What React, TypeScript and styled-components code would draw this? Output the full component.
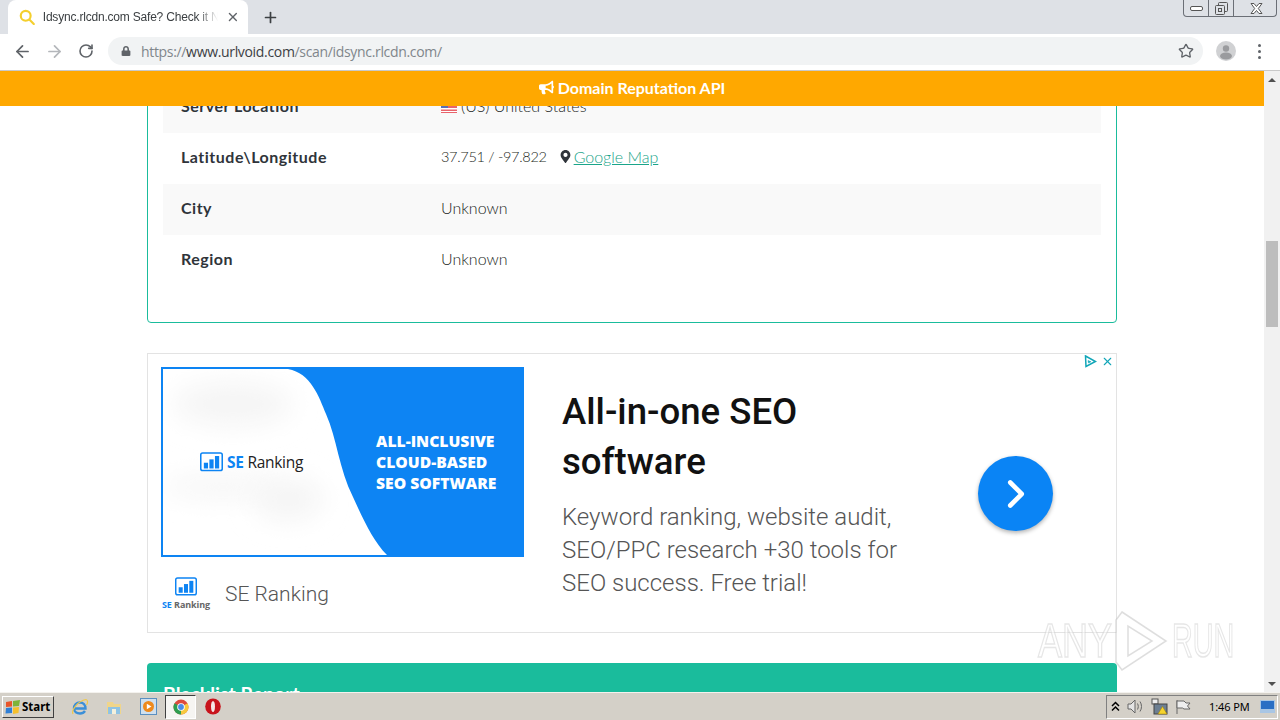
import React from 'react';
import styled, { createGlobalStyle } from 'styled-components';
import { FaBullhorn, FaLock, FaMapMarkerAlt } from 'react-icons/fa';
import { ArrowLeft, ArrowRight, ChevronRight, Plus, RotateCw, Star, X } from 'lucide-react';

const GlobalStyle = createGlobalStyle`
  html, body {
    margin: 0;
    padding: 0;
    width: 1280px;
    height: 720px;
    overflow: hidden;
    background: #fff;
  }
  * { box-sizing: border-box; }
`;

const Screen = styled.div`
  width: 1280px;
  height: 720px;
  display: flex;
  flex-direction: column;
  overflow: hidden;
  position: relative;
  font-family: 'Lato', 'Liberation Sans', sans-serif;
`;

/* browser chrome */
const TabStrip = styled.div`
  height: 34px;
  flex: none;
  background: #dee1e6;
  display: flex;
  align-items: flex-end;
  padding-left: 8px;
`;

const Tab = styled.div`
  width: 240px;
  height: 34px;
  background: #fff;
  border-radius: 8px 8px 0 0;
  display: flex;
  align-items: center;
  padding: 0 8px 0 11px;
  gap: 8px;
`;

const TabTitle = styled.span`
  width: 178px;
  font: 12px 'Liberation Sans', 'Open Sans', sans-serif;
  letter-spacing: -0.2px;
  color: #3c4043;
  white-space: nowrap;
  overflow: hidden;
  -webkit-mask-image: linear-gradient(to right, #000 88%, transparent);
  mask-image: linear-gradient(to right, #000 88%, transparent);
`;

const NewTab = styled.div`
  width: 44px;
  height: 34px;
  display: flex;
  align-items: center;
  justify-content: center;
  color: #3c4043;
`;

const WindowControls = styled.div`
  margin-left: auto;
  margin-right: 3px;
  align-self: flex-start;
  width: 94px;
  height: 17px;
  display: grid;
  grid-template-columns: 25px 25px 44px;
  border: 1px solid #6b6f76;
  border-top: none;
  border-radius: 0 0 4px 4px;
`;

const WindowButton = styled.div<{ $last?: boolean }>`
  display: flex;
  align-items: center;
  justify-content: center;
  border-right: ${p => (p.$last ? 'none' : '1px solid #6b6f76')};
`;

const Toolbar = styled.div`
  height: 37px;
  flex: none;
  background: #fff;
  border-bottom: 1px solid #c9c9c9;
  display: flex;
  align-items: center;
  padding: 0 0 2px 0;
`;

const NavButton = styled.div<{ $muted?: boolean }>`
  width: 32px;
  height: 28px;
  flex: none;
  display: flex;
  align-items: center;
  justify-content: center;
  color: ${p => (p.$muted ? '#b4b7bb' : '#5f6368')};
`;

const NavGroup = styled.div`
  display: flex;
  padding-left: 6px;
  margin-right: 6px;
`;

const Omnibox = styled.div`
  width: 1095px;
  height: 28px;
  flex: none;
  background: #f1f3f4;
  border-radius: 14px;
  display: flex;
  align-items: center;
  padding: 0 9px 0 13px;
`;

const Url = styled.span`
  margin-left: 10px;
  font: 14px 'Open Sans', 'Liberation Sans', sans-serif;
  letter-spacing: -0.33px;
  color: #80868b;
  white-space: nowrap;
`;

const UrlStrong = styled.span`
  color: #3c4043;
`;

const StarSlot = styled.div`
  margin-left: auto;
  display: flex;
  color: #5f6368;
`;

const Avatar = styled.div`
  width: 20px;
  height: 20px;
  flex: none;
  margin-left: 13px;
  border-radius: 50%;
  background: #d0d1d3;
  overflow: hidden;
`;

const MenuDots = styled.div`
  flex: none;
  margin-left: 22px;
  display: grid;
  gap: 3px;
`;

const MenuDot = styled.i`
  display: block;
  width: 3px;
  height: 3px;
  border-radius: 50%;
  background: #5f6368;
`;

/* page */
const Viewport = styled.div`
  flex: 1;
  min-height: 0;
  display: flex;
  position: relative;
`;

const Page = styled.main`
  width: 1264px;
  flex: none;
  overflow: hidden;
  position: relative;
  background: #fff;
`;

const StickyBar = styled.div`
  position: absolute;
  top: 0;
  left: 0;
  right: 0;
  height: 35px;
  z-index: 2;
  background: #ffa800;
  color: #fff;
  font-size: 16px;
  font-weight: 700;
  display: flex;
  align-items: center;
  justify-content: center;
  gap: 4px;
  padding-bottom: 2px;
`;

const Column = styled.div`
  width: 970px;
  margin: -20px auto 0 147px;
  display: flex;
  flex-direction: column;
`;

const InfoCard = styled.section`
  border: 1px solid #1abc9c;
  border-radius: 4px;
  padding: 30px 15px 36px;
`;

const Row = styled.div<{ $shaded?: boolean }>`
  height: 51px;
  display: grid;
  grid-template-columns: 260px 1fr;
  align-items: center;
  padding: 0 0 4px 18px;
  font-size: 16px;
  color: #2f343a;
  background: ${p => (p.$shaded ? '#f9f9f9' : '#fff')};
`;

const RowLabel = styled.div`
  font-weight: 700;
  letter-spacing: 0.5px;
`;

const RowValue = styled.div`
  font-weight: 300;
  color: #1c1f22;
  display: flex;
  align-items: center;
`;

const Coords = styled.span`
  font-size: 14.5px;
  letter-spacing: -0.3px;
`;

const FlagIcon = styled.svg`
  margin: 0 4px 0 0;
`;

const MapLink = styled.a`
  margin-left: 12px;
  display: inline-flex;
  align-items: center;
  gap: 2px;
  color: #2f343a;
  text-decoration: none;
`;

const MapLinkText = styled.span`
  color: #1aa58a;
  text-decoration: underline;
`;

const AdCard = styled.section`
  position: relative;
  margin-top: 30px;
  height: 280px;
  border: 1px solid #e3e3e3;
  padding: 13px 13px 0;
  display: grid;
  grid-template-columns: 363px 1fr;
  column-gap: 38px;
  font-family: 'Roboto', 'Liberation Sans', sans-serif;
`;

const AdChoices = styled.div`
  position: absolute;
  top: 1px;
  right: 2px;
  display: flex;
  gap: 4px;
  align-items: center;
  color: #11a6b8;
`;

const AdLeft = styled.div`
  display: flex;
  flex-direction: column;
`;

const Creative = styled.div`
  position: relative;
  height: 190px;
  border: 2px solid #0d84f3;
  background: #fff;
  overflow: hidden;
  display: grid;
  grid-template-columns: 213px 1fr;
  align-items: center;
`;

const CreativeArt = styled.svg`
  position: absolute;
  inset: 0;
`;

const CreativeLogo = styled.div`
  position: relative;
  display: flex;
  align-items: center;
  justify-content: flex-end;
  gap: 4px;
  padding-right: 73px;
  font: 500 15.5px 'Open Sans', 'Liberation Sans', sans-serif;
  letter-spacing: -0.3px;
  color: #222;
  white-space: nowrap;
`;

const CreativeLogoSE = styled.span`
  color: #0d84f3;
  font-weight: 700;
`;

const CreativeHeadline = styled.div`
  position: relative;
  font: 800 15.7px/21px 'Open Sans', 'Liberation Sans', sans-serif;
  color: #fff;
  white-space: nowrap;
`;

const AdBrand = styled.div`
  margin-top: 20px;
  display: flex;
  align-items: center;
  gap: 14px;
`;

const BrandMark = styled.div`
  width: 50px;
  display: flex;
  flex-direction: column;
  align-items: center;
  gap: 2px;
`;

const BrandMarkText = styled.span`
  font: 700 9px 'Open Sans', 'Liberation Sans', sans-serif;
  color: #666;
  white-space: nowrap;
  letter-spacing: -0.1px;
`;

const BrandMarkSE = styled.span`
  color: #0d84f3;
`;

const BrandName = styled.span`
  font-size: 21px;
  font-weight: 300;
  color: #555;
`;

const AdBody = styled.div`
  display: flex;
  flex-direction: column;
  padding-top: 20px;
`;

const AdTitle = styled.h2`
  margin: 0;
  width: 300px;
  font-size: 36.6px;
  line-height: 50px;
  font-weight: 500;
  color: #111;
`;

const AdText = styled.p`
  margin: 14px 0 0;
  width: 360px;
  font-size: 24px;
  line-height: 33px;
  font-weight: 300;
  color: #555;
`;

const AdArrow = styled.div`
  position: absolute;
  left: 830px;
  top: 102px;
  width: 75px;
  height: 75px;
  border-radius: 50%;
  background: #0a84f5;
  box-shadow: 0 2px 4px rgba(0, 0, 0, 0.3);
  color: #fff;
  display: flex;
  align-items: center;
  justify-content: center;
`;

const ReportCard = styled.section`
  margin-top: 30px;
  height: 60px;
  background: #1abc9c;
  border-radius: 4px 4px 0 0;
  padding: 20px 16px 0;
  color: #fff;
  font-size: 19.5px;
  font-weight: 700;
  line-height: 22px;
  overflow: hidden;
`;

const Watermark = styled.div`
  position: absolute;
  left: 1038px;
  top: 539px;
  z-index: 3;
  display: grid;
  grid-template-columns: 76px 58px 60px;
  align-items: center;
  pointer-events: none;
`;

const WatermarkWord = styled.span<{ $squeeze: number }>`
  display: block;
  font: 400 48px/62px 'Liberation Sans', sans-serif;
  white-space: nowrap;
  color: rgba(255, 255, 255, 0.5);
  -webkit-text-stroke: 1.5px rgba(200, 200, 200, 0.45);
  transform: scaleX(${p => p.$squeeze});
  transform-origin: left center;
`;

/* scrollbar */
const Scrollbar = styled.aside`
  width: 16px;
  flex: none;
  background: #f1f1f1;
  display: flex;
  flex-direction: column;
  align-items: center;
`;

const ScrollArrow = styled.div<{ $down?: boolean }>`
  height: 17px;
  flex: none;
  margin-top: ${p => (p.$down ? 'auto' : '0')};
  display: flex;
  align-items: center;
  &::before {
    content: '';
    border-left: 4px solid transparent;
    border-right: 4px solid transparent;
    border-bottom: ${p => (p.$down ? 'none' : '4px solid #505050')};
    border-top: ${p => (p.$down ? '4px solid #505050' : 'none')};
  }
`;

const ScrollThumb = styled.div`
  width: 12px;
  height: 86px;
  flex: none;
  margin-top: 153px;
  background: #bdbdbd;
`;

/* windows taskbar */
const Taskbar = styled.footer`
  height: 28px;
  flex: none;
  background: #d4d0c8;
  border-top: 1px solid #f4f2ee;
  display: flex;
  align-items: center;
  padding-left: 2px;
`;

const StartButton = styled.div`
  width: 52px;
  height: 22px;
  flex: none;
  background: #d4d0c8;
  border: 1px solid;
  border-color: #fff #404040 #404040 #fff;
  display: flex;
  align-items: center;
  gap: 1px;
  padding-left: 2px;
  font: 700 11.5px 'Noto Sans', 'Liberation Sans', sans-serif;
  color: #000;
`;

const QuickLaunch = styled.div`
  display: flex;
  align-items: center;
  margin-left: 9px;
`;

const TaskSlot = styled.div<{ $active?: boolean }>`
  width: ${p => (p.$active ? '31px' : '34px')};
  height: 24px;
  display: flex;
  align-items: center;
  justify-content: center;
  background: ${p => (p.$active ? '#f6f5f2' : 'transparent')};
  border: ${p => (p.$active ? '1px solid' : 'none')};
  border-color: #404040 #fff #fff #404040;
`;

const Tray = styled.div`
  margin-left: auto;
  margin-right: 2px;
  width: 172px;
  height: 24px;
  border: 1px solid;
  border-color: #808080 #fff #fff #808080;
  display: flex;
  align-items: center;
  padding-left: 4px;
  gap: 7px;
`;

const TrayIcon = styled.div`
  display: flex;
  flex: none;
`;

const Clock = styled.span`
  margin-left: 11px;
  margin-right: 3px;
  font: 11px 'Noto Sans', 'Liberation Sans', sans-serif;
  letter-spacing: -0.1px;
  color: #000;
  white-space: nowrap;
`;

const BarsGlyph = ({ size, color }: { size: number; color: string }) => (
  <svg width={size} height={size * 0.85} viewBox="0 0 24 20">
    <rect x="0.8" y="0.8" width="22.4" height="18.4" rx="2" fill="#fff" stroke={color} strokeWidth="1.6" />
    <rect x="4" y="11" width="4.4" height="6" fill={color} />
    <rect x="9.8" y="7.5" width="4.4" height="9.5" fill={color} />
    <rect x="15.6" y="4" width="4.4" height="13" fill={color} />
  </svg>
);

const App: React.FC = () => (
  <Screen>
    <GlobalStyle />
    <TabStrip>
      <Tab>
        <svg width="16" height="16" viewBox="0 0 16 16" fill="none" stroke="#f4cf2e" strokeWidth="2.2">
          <circle cx="6.8" cy="6.8" r="5" />
          <path d="M10.5 10.5 15 15" strokeLinecap="round" />
        </svg>
        <TabTitle>Idsync.rlcdn.com Safe? Check it Now</TabTitle>
        <X size={14} color="#5f6368" strokeWidth={2.4} />
      </Tab>
      <NewTab>
        <Plus size={17} strokeWidth={2.4} />
      </NewTab>
      <WindowControls>
        <WindowButton>
          <svg width="13" height="7" viewBox="0 0 13 7">
            <rect x="0.5" y="1.5" width="12" height="4" rx="1.5" fill="#fff" stroke="#555" />
          </svg>
        </WindowButton>
        <WindowButton>
          <svg width="13" height="13" viewBox="0 0 13 13" fill="none" stroke="#555">
            <rect x="3.5" y="0.5" width="9" height="9" rx="1" />
            <rect x="0.5" y="3.5" width="9" height="9" rx="1" fill="#dee1e6" />
            <rect x="3.5" y="6.5" width="3" height="3" />
          </svg>
        </WindowButton>
        <WindowButton $last>
          <svg width="13" height="11" viewBox="0 0 13 11" fill="#fff" stroke="#555">
            <path d="M1 .5h3L6.500 3.500 9 .5h3L8.300 5.500 12 10.500H9L6.500 7.500 4 10.500H1L4.700 5.500z" />
          </svg>
        </WindowButton>
      </WindowControls>
    </TabStrip>

    <Toolbar>
      <NavGroup>
        <NavButton><ArrowLeft size={19} strokeWidth={2.2} /></NavButton>
        <NavButton $muted><ArrowRight size={19} strokeWidth={2.2} /></NavButton>
        <NavButton><RotateCw size={16} strokeWidth={2.4} /></NavButton>
      </NavGroup>
      <Omnibox>
        <FaLock size={10} color="#5f6368" />
        <Url>
          https://<UrlStrong>www.urlvoid.com</UrlStrong>/scan/idsync.rlcdn.com/
        </Url>
        <StarSlot><Star size={16} strokeWidth={2} /></StarSlot>
      </Omnibox>
      <Avatar>
        <svg width="20" height="20" viewBox="0 0 20 20" fill="#9a9b9e">
          <circle cx="10" cy="7.500" r="3.200" />
          <ellipse cx="10" cy="15" rx="6" ry="3.500" />
        </svg>
      </Avatar>
      <MenuDots>
        <MenuDot />
        <MenuDot />
        <MenuDot />
      </MenuDots>
    </Toolbar>

    <Viewport>
      <Page>
        <StickyBar>
          <FaBullhorn size={15} />
          Domain Reputation API
        </StickyBar>
        <Column>
          <InfoCard>
            <Row $shaded>
              <RowLabel>Server Location</RowLabel>
              <RowValue>
                <FlagIcon width="16" height="14" viewBox="0 0 16 14">
                  <rect width="16" height="14" fill="#e8636b" />
                  <rect y="2" width="16" height="1.500" fill="#fff" />
                  <rect y="5.500" width="16" height="1.500" fill="#fff" />
                  <rect y="9" width="16" height="1.500" fill="#fff" />
                  <rect y="12" width="16" height="1" fill="#fff" />
                  <rect width="7" height="9" fill="#5a6fb5" />
                </FlagIcon>
                (US) United States
              </RowValue>
            </Row>
            <Row>
              <RowLabel>Latitude\Longitude</RowLabel>
              <RowValue>
                <Coords>37.751 / -97.822</Coords>
                <MapLink>
                  <FaMapMarkerAlt size={13} />
                  <MapLinkText>Google Map</MapLinkText>
                </MapLink>
              </RowValue>
            </Row>
            <Row $shaded>
              <RowLabel>City</RowLabel>
              <RowValue>Unknown</RowValue>
            </Row>
            <Row>
              <RowLabel>Region</RowLabel>
              <RowValue>Unknown</RowValue>
            </Row>
          </InfoCard>

          <AdCard>
            <AdChoices>
              <svg width="13" height="13" viewBox="0 0 13 13" fill="none" stroke="currentColor" strokeWidth="1.500">
                <path d="M1.500 1 11.500 6.500 2 11.500z" />
                <path d="M4 5.500 7 6.800 4.500 8z" fill="currentColor" strokeWidth="0.500" />
              </svg>
              <X size={13} strokeWidth={2} />
            </AdChoices>
            <AdLeft>
              <Creative>
                <CreativeArt width="359" height="186" viewBox="0 0 359 186">
                  <defs>
                    <filter id="soft" x="-50%" y="-100%" width="200%" height="300%">
                      <feGaussianBlur stdDeviation="13" />
                    </filter>
                  </defs>
                  <ellipse cx="70" cy="35" rx="60" ry="22" fill="#f5f5f5" filter="url(#soft)" />
                  <ellipse cx="60" cy="118" rx="60" ry="12" fill="#f6f6f6" filter="url(#soft)" />
                  <ellipse cx="125" cy="130" rx="35" ry="22" fill="#f5f5f5" filter="url(#soft)" />
                  <path d="M125 0C148 4 156 28 163 45 174 70 176 100 190 128 200 150 210 172 224 186H359V0Z" fill="#0d84f3" />
                </CreativeArt>
                <CreativeLogo>
                  <BarsGlyph size={23} color="#0d84f3" />
                  <span>
                    <CreativeLogoSE>SE</CreativeLogoSE> Ranking
                  </span>
                </CreativeLogo>
                <CreativeHeadline>
                  ALL-INCLUSIVE
                  <br />
                  CLOUD-BASED
                  <br />
                  SEO SOFTWARE
                </CreativeHeadline>
              </Creative>
              <AdBrand>
                <BrandMark>
                  <BarsGlyph size={22} color="#0d84f3" />
                  <BrandMarkText>
                    <BrandMarkSE>SE</BrandMarkSE> Ranking
                  </BrandMarkText>
                </BrandMark>
                <BrandName>SE Ranking</BrandName>
              </AdBrand>
            </AdLeft>
            <AdBody>
              <AdTitle>All-in-one SEO software</AdTitle>
              <AdText>Keyword ranking, website audit, SEO/PPC research +30 tools for SEO success. Free trial!</AdText>
            </AdBody>
            <AdArrow>
              <ChevronRight size={46} strokeWidth={2.4} />
            </AdArrow>
          </AdCard>

          <ReportCard>Blacklist Report</ReportCard>
        </Column>
        <Watermark>
          <WatermarkWord $squeeze={0.75}>ANY</WatermarkWord>
          <svg width="54" height="62" viewBox="0 0 54 62" fill="rgba(255,255,255,0.5)" stroke="rgba(190,190,190,0.5)" strokeWidth="1.500">
            <path d="M8 2 52 31 8 60 2 52V10ZM14 16V46L38 31Z" fillRule="evenodd" />
          </svg>
          <WatermarkWord $squeeze={0.6}>RUN</WatermarkWord>
        </Watermark>
      </Page>
      <Scrollbar>
        <ScrollArrow />
        <ScrollThumb />
        <ScrollArrow $down />
      </Scrollbar>
    </Viewport>

    <Taskbar>
      <StartButton>
        <svg width="16" height="16" viewBox="0 0 16 16">
          <path d="M1 3 7 2 7 7.500 1 8z" fill="#e8552a" />
          <path d="M8 2 15 1 14 7 8 7.500z" fill="#7db33a" />
          <path d="M1 9 7 8.500 7 14 0.500 14.500z" fill="#2f7fd6" />
          <path d="M8 8.500 14 8 13.500 14 8 15z" fill="#f5c02c" />
        </svg>
        Start
      </StartButton>
      <QuickLaunch>
        <TaskSlot>
          <svg width="18" height="18" viewBox="0 0 18 18" fill="none">
            <path d="M3 10.500H14.500C14.500 6.500 12 4.500 9 4.500 5.500 4.500 3 7 3 10.500 3 14 6 15.500 9 15.500 11 15.500 13 14.500 14 13" stroke="#3b8fd8" strokeWidth="2.400" />
            <path d="M2 16C0 12 7 3 15 1.500 17 2 17 5 15.500 7" stroke="#f0c84a" strokeWidth="1.200" />
          </svg>
        </TaskSlot>
        <TaskSlot>
          <svg width="18" height="18" viewBox="0 0 18 18">
            <path d="M2 4h6l1 2h7v10H2z" fill="#f0d58a" />
            <rect x="3" y="9" width="12" height="7" fill="#8fc3e4" />
            <rect x="7" y="11" width="4" height="5" fill="#f4f0dc" />
          </svg>
        </TaskSlot>
        <TaskSlot>
          <svg width="17" height="17" viewBox="0 0 17 17">
            <rect x="0.500" y="0.500" width="16" height="16" fill="#cfe0ef" stroke="#5a8fc0" />
            <circle cx="8.500" cy="8.500" r="5.500" fill="#ee8a1c" />
            <path d="M6.800 5.800 11.500 8.500 6.800 11.200z" fill="#fff" />
          </svg>
        </TaskSlot>
        <TaskSlot $active>
          <svg width="16" height="16" viewBox="0 0 16 16">
            <circle cx="8" cy="8" r="7.500" fill="#dd4b3e" />
            <path d="M8 8 14.500 4.250A7.500 7.500 0 0 1 8 15.500z" fill="#f7c93e" />
            <path d="M8 8 8 15.500A7.500 7.500 0 0 1 1.500 4.250z" fill="#2f9e50" />
            <circle cx="8" cy="8" r="3.800" fill="#fff" />
            <circle cx="8" cy="8" r="2.900" fill="#4a8ce8" />
          </svg>
        </TaskSlot>
        <TaskSlot>
          <svg width="16" height="17" viewBox="0 0 16 17">
            <ellipse cx="8" cy="8.500" rx="7.800" ry="8" fill="#c8141c" />
            <ellipse cx="8" cy="8.500" rx="2" ry="5.600" fill="#f5e6e6" />
          </svg>
        </TaskSlot>
      </QuickLaunch>
      <Tray>
        <TrayIcon>
          <svg width="9" height="11" viewBox="0 0 9 11" fill="none" stroke="#000" strokeWidth="1.500">
            <path d="M1 5 4.500 1.500 8 5M1 9.500 4.500 6 8 9.500" />
          </svg>
        </TrayIcon>
        <TrayIcon>
          <svg width="17" height="15" viewBox="0 0 17 15" fill="none" stroke="#666">
            <path d="M1 5h3l4-4v13l-4-4H1z" fill="#e4e4e4" />
            <path d="M10.500 4.500c1 2 1 4 0 6M13 2.500c2 3 2 7 0 10" />
          </svg>
        </TrayIcon>
        <TrayIcon>
          <svg width="17" height="17" viewBox="0 0 17 17">
            <rect x="1" y="1" width="6" height="5" fill="#eee" stroke="#555" />
            <rect x="3" y="6" width="13" height="10" fill="#6d7f92" stroke="#444" />
            <path d="M11.500 8.500 16 16H7z" fill="#f6d32d" stroke="#9c7c00" strokeWidth="0.500" />
          </svg>
        </TrayIcon>
        <TrayIcon>
          <svg width="16" height="16" viewBox="0 0 16 16" fill="#eee" stroke="#666">
            <path d="M2 1V15" />
            <path d="M2 2H9L11 4H15L12.500 7 15 10H9L7.500 9H2z" />
          </svg>
        </TrayIcon>
        <Clock>1:46 PM</Clock>
        <TrayIcon>
          <svg width="15" height="13" viewBox="0 0 15 13">
            <rect width="15" height="13" fill="#a9c6e4" />
            <rect x="1" y="1" width="13" height="8" fill="#2a6fc4" />
          </svg>
        </TrayIcon>
      </Tray>
    </Taskbar>
  </Screen>
);

export default App;
